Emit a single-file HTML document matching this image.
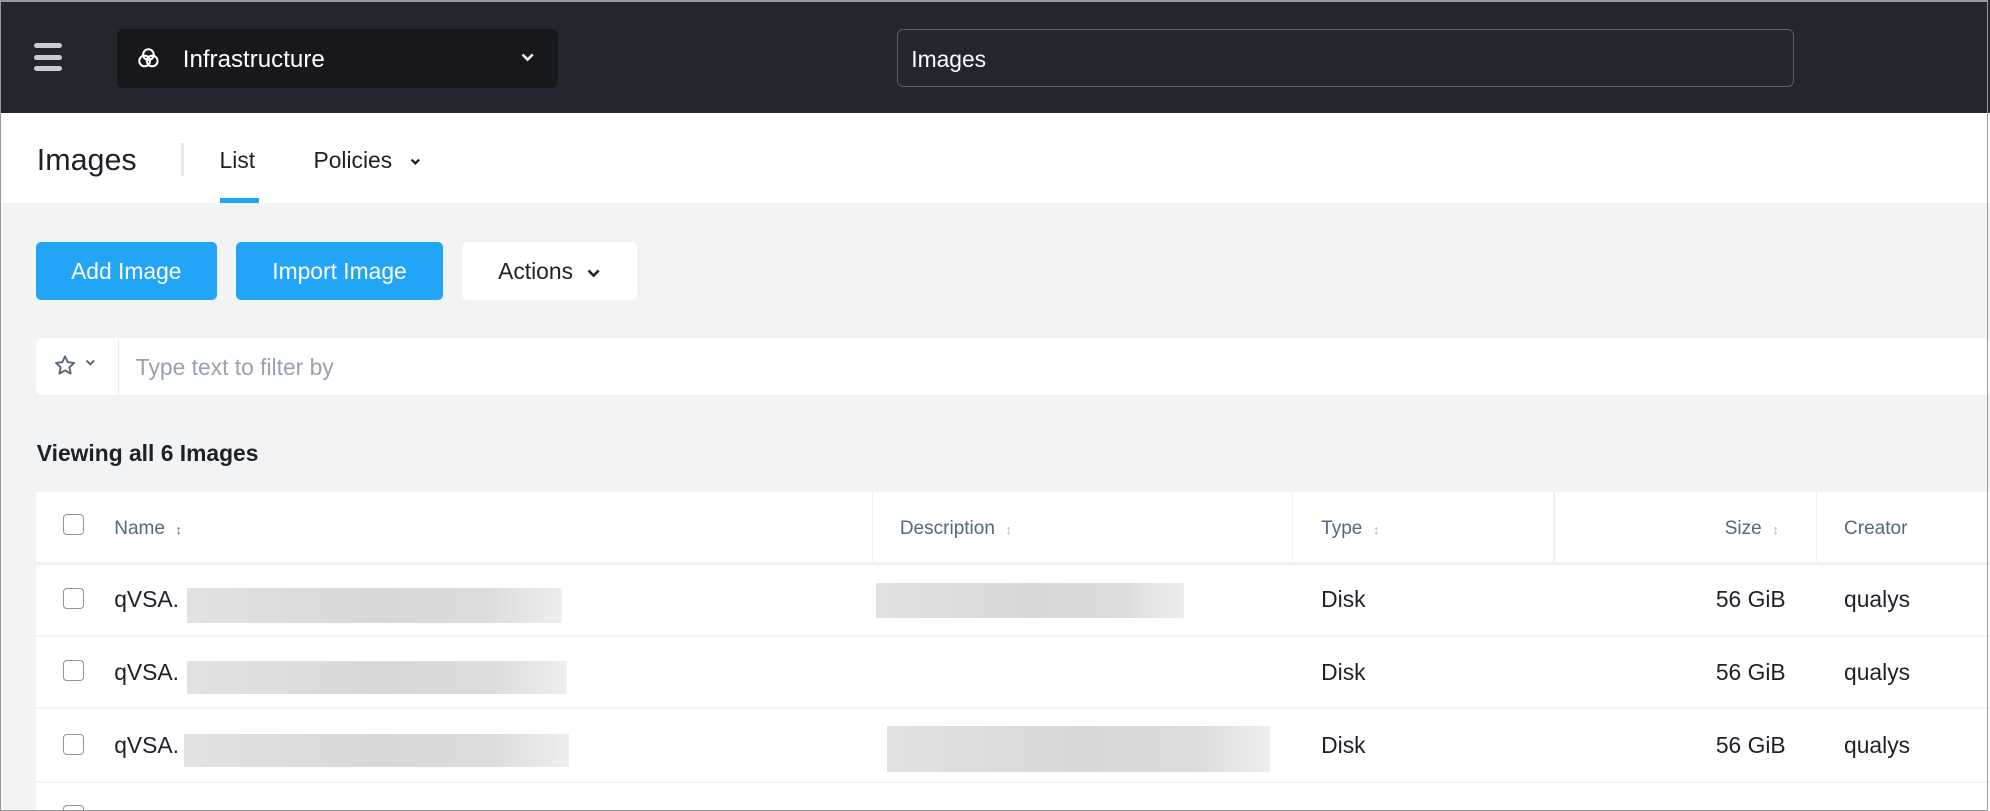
<!DOCTYPE html>
<html><head><meta charset="utf-8"><style>
html,body{margin:0;padding:0;overflow:hidden;background:#f2f3f5}
body{width:1568px;height:639px;zoom:1.26913;font-family:"Liberation Sans",sans-serif;position:relative}
.a{position:absolute}
.frame{left:0;top:0;width:1565px;height:637px;border:1px solid #9a9a9a;border-top-width:2px;box-sizing:content-box}
.top{left:0;top:0;width:1568px;height:89px;background:#22262e}
.btn{top:191px;height:45px;border-radius:4px;font-size:18px;line-height:47px;text-align:center;color:#fff;background:#22a5f7}
.cb{width:15px;height:15px;border:1.5px solid #8a96a3;border-radius:3px;background:#fff}
.hd{font-size:15px;color:#56677a;top:408px}
.cell{font-size:18px;color:#1d2228}
.blur{background:linear-gradient(90deg,#e2e2e2,#d8d8d8 50%,#dcdcdc 80%,#eee)}
.s{font-size:10px;color:#aab3bc}
</style></head><body>
<div class="a top"></div>
<div class="a" style="left:27px;top:34px;width:22px;height:4px;background:#c9ccd1;border-radius:2px"></div>
<div class="a" style="left:27px;top:43px;width:22px;height:4px;background:#c9ccd1;border-radius:2px"></div>
<div class="a" style="left:27px;top:52px;width:22px;height:4px;background:#c9ccd1;border-radius:2px"></div>
<div class="a" style="left:92px;top:23px;width:348px;height:46px;background:#16181c;border-radius:5px"></div>
<svg class="a" style="left:108px;top:37px" width="18" height="18" viewBox="0 0 18 18" fill="none" stroke="#fff" stroke-width="1.6"><circle cx="9" cy="6" r="4.2"/><circle cx="6" cy="11" r="4.2"/><circle cx="12" cy="11" r="4.2"/></svg>
<div class="a" style="left:144px;top:36px;font-size:19px;color:#fff">Infrastructure</div>
<svg class="a" style="left:410px;top:41px" width="12" height="9" viewBox="0 0 12 9"><path d="M2 2l4 4 4-4" stroke="#fff" stroke-width="2" fill="none"/></svg>
<div class="a" style="left:707px;top:23px;width:705px;height:44px;border:1px solid #5a5f68;border-radius:5px"></div>
<div class="a" style="left:718px;top:36px;font-size:18px;color:#fff">Images</div>
<div class="a" style="left:0;top:89px;width:1568px;height:71px;background:#fff"></div>
<div class="a" style="left:29px;top:113px;font-size:24px;color:#1d2228">Images</div>
<div class="a" style="left:143px;top:113px;width:2px;height:26px;background:#e5e7ea"></div>
<div class="a" style="left:173px;top:116px;font-size:18px;color:#1d2228">List</div>
<div class="a" style="left:173px;top:156px;width:31px;height:4px;background:#22a5f7"></div>
<div class="a" style="left:247px;top:116px;font-size:18px;color:#1d2228">Policies</div>
<svg class="a" style="left:322px;top:124px" width="10" height="8" viewBox="0 0 10 8"><path d="M2 2l3 3 3-3" stroke="#1d2228" stroke-width="1.8" fill="none"/></svg>
<div class="a btn" style="left:28px;width:143px">Add Image</div>
<div class="a btn" style="left:186px;width:163px">Import Image</div>
<div class="a btn" style="left:364px;width:138px;background:#fff;color:#1d2228">Actions &nbsp;<svg width="12" height="9" viewBox="0 0 12 9"><path d="M2 2l4 4 4-4" stroke="#1d2228" stroke-width="2" fill="none"/></svg></div>
<div class="a" style="left:28px;top:266px;width:1540px;height:45px;background:#fff;border-radius:4px"></div>
<div class="a" style="left:93px;top:266px;width:1px;height:45px;background:#eceef0"></div>
<svg class="a" style="left:42px;top:279px" width="19" height="18" viewBox="0 0 24 24"><path d="M12 2.5l2.9 6.1 6.6.8-4.9 4.6 1.3 6.6L12 17.3 6.1 20.6l1.3-6.6-4.9-4.6 6.6-.8z" fill="none" stroke="#56677a" stroke-width="2" stroke-linejoin="round"/></svg>
<svg class="a" style="left:66px;top:282px" width="10" height="8" viewBox="0 0 10 8"><path d="M2 2l3 3 3-3" stroke="#56677a" stroke-width="1.6" fill="none"/></svg>
<div class="a" style="left:107px;top:279px;font-size:18px;color:#98a2ae">Type text to filter by</div>
<div class="a" style="left:29px;top:347px;font-size:18px;font-weight:bold;color:#1d2228">Viewing all 6 Images</div>
<div class="a" style="left:28px;top:388px;width:1540px;height:251px;background:#fff"></div>
<div class="a" style="left:28px;top:443px;width:1540px;height:2px;background:#eef0f2"></div>
<div class="a" style="left:28px;top:500px;width:1540px;height:2px;background:#f2f3f5"></div>
<div class="a" style="left:28px;top:557px;width:1540px;height:2px;background:#f2f3f5"></div>
<div class="a" style="left:28px;top:615px;width:1540px;height:2px;background:#f2f3f5"></div>
<div class="a" style="left:687px;top:388px;width:1px;height:55px;background:#eef0f2"></div>
<div class="a" style="left:1018px;top:388px;width:1px;height:55px;background:#eef0f2"></div>
<div class="a" style="left:1224px;top:388px;width:1px;height:55px;background:#eef0f2"></div>
<div class="a" style="left:1431px;top:388px;width:1px;height:55px;background:#eef0f2"></div>
<div class="a cb" style="left:50px;top:405px"></div>
<div class="a hd" style="left:90px">Name &nbsp;<span class="s" style="color:#56677a">&#8597;</span></div>
<div class="a hd" style="left:709px">Description &nbsp;<span class="s">&#8597;</span></div>
<div class="a hd" style="left:1041px">Type &nbsp;<span class="s">&#8597;</span></div>
<div class="a hd" style="left:1359px">Size &nbsp;<span class="s">&#8597;</span></div>
<div class="a hd" style="left:1453px">Creator</div>

<div class="a cb" style="left:50px;top:463px"></div>
<div class="a cell" style="left:90px;top:462px">qVSA.</div>
<div class="a blur" style="left:147px;top:463px;width:296px;height:28px"></div>
<div class="a blur" style="left:690px;top:459px;width:243px;height:28px"></div>
<div class="a cell" style="left:1041px;top:462px">Disk</div>
<div class="a cell" style="left:1352px;top:462px">56 GiB</div>
<div class="a cell" style="left:1453px;top:462px">qualys</div>

<div class="a cb" style="left:50px;top:520px"></div>
<div class="a cell" style="left:90px;top:519px">qVSA.</div>
<div class="a blur" style="left:147px;top:521px;width:300px;height:26px"></div>
<div class="a cell" style="left:1041px;top:519px">Disk</div>
<div class="a cell" style="left:1352px;top:519px">56 GiB</div>
<div class="a cell" style="left:1453px;top:519px">qualys</div>

<div class="a cb" style="left:50px;top:578px"></div>
<div class="a cell" style="left:90px;top:577px">qVSA.</div>
<div class="a blur" style="left:145px;top:578px;width:303px;height:26px"></div>
<div class="a blur" style="left:699px;top:572px;width:302px;height:36px"></div>
<div class="a cell" style="left:1041px;top:577px">Disk</div>
<div class="a cell" style="left:1352px;top:577px">56 GiB</div>
<div class="a cell" style="left:1453px;top:577px">qualys</div>
<div class="a cb" style="left:50px;top:634px"></div>
<div class="a frame"></div>
</body></html>
